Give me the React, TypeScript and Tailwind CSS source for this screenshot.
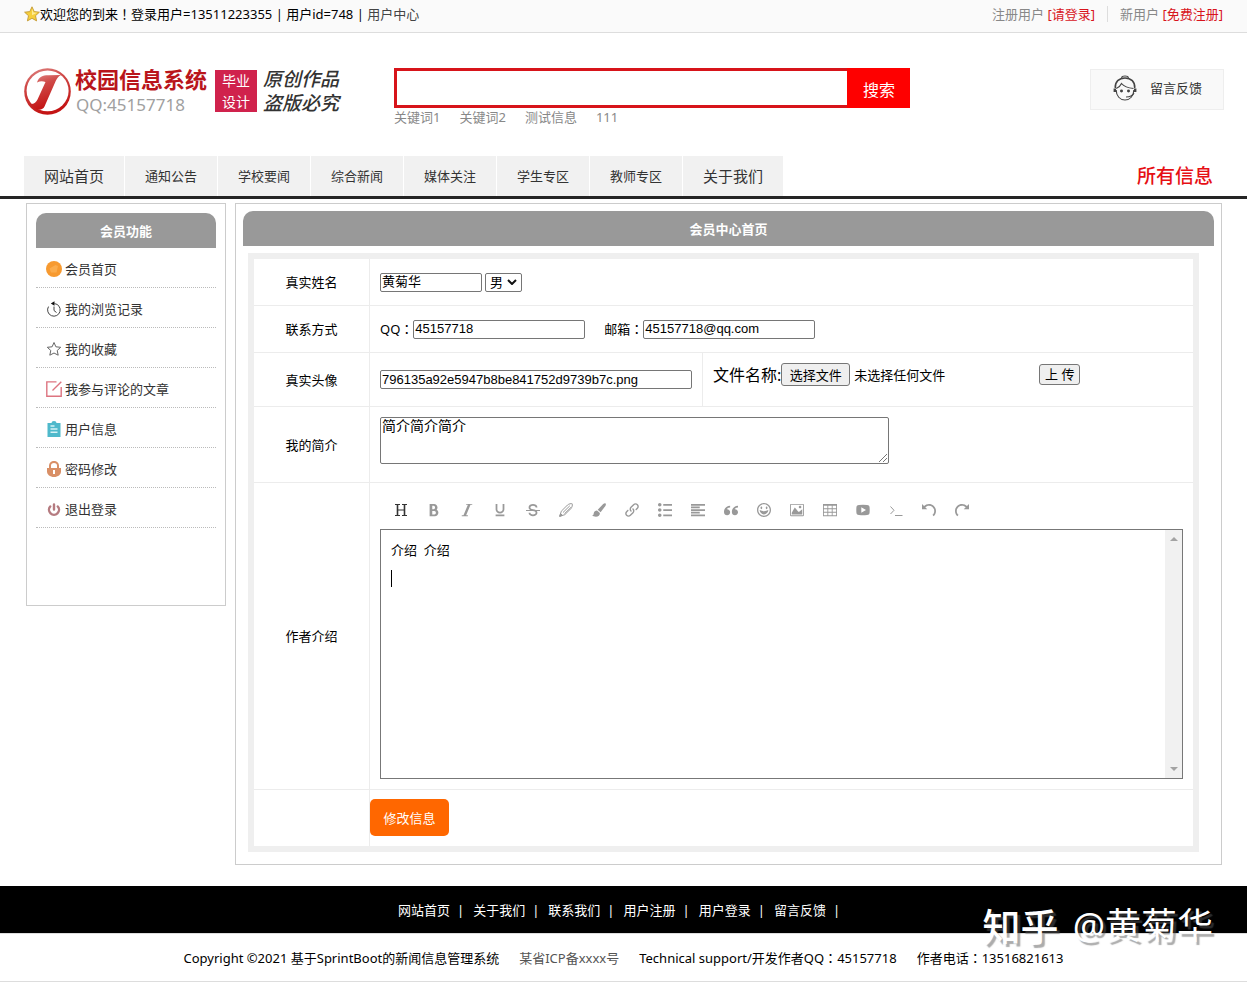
import React from "react";
import {
  ImBold,
  ImItalic,
  ImUnderline,
  ImStrikethrough,
  ImLink,
  ImList2,
  ImParagraphLeft,
  ImQuotesLeft,
  ImHappy,
  ImImage,
  ImTable2,
  ImUndo,
  ImRedo,
} from "react-icons/im";

const topics = ["通知公告", "学校要闻", "综合新闻", "媒体关注", "学生专区", "教师专区"];
const keywords = ["关键词1", "关键词2", "测试信息", "111"];
const footerLinks = ["网站首页", "关于我们", "联系我们", "用户注册", "用户登录", "留言反馈"];

const field =
  "rounded-[2px] border border-[#767676] bg-white px-px font-['Liberation_Sans','Noto_Sans_CJK_SC',sans-serif] text-[13px] text-black outline-none";
const labelCell =
  "border-r border-b border-[#ececec] text-center align-middle font-normal";
const bodyCell = "border-b border-[#ececec] px-[10px] align-middle";

// Full-width punctuation set in the middle of its cell.
function Mark({ children }: { children: string }) {
  return (
    <span lang="ja" className="font-['Noto_Sans_CJK_JP',sans-serif]">
      {children}
    </span>
  );
}

function StarIcon() {
  return (
    <svg className="size-4 shrink-0" viewBox="0 0 16 16" aria-hidden="true">
      <path
        d="M8 .8l2.2 4.8 5.2.6-3.9 3.5 1.1 5.2L8 12.3l-4.6 2.6 1.1-5.2L.6 6.2l5.2-.6z"
        fill="#f6cf3c"
        stroke="#c39a35"
        strokeWidth=".9"
      />
      <path d="M8 2.8l1.5 3.6 3.6.4L8 9.2z" fill="#fdeb96" />
    </svg>
  );
}

function LogoMark() {
  return (
    <svg className="size-[47px] shrink-0" viewBox="0 0 47 47" aria-hidden="true">
      <defs>
        <linearGradient id="logoRed" x1="0" y1="0" x2=".3" y2="1">
          <stop offset="0" stopColor="#e08a88" />
          <stop offset=".35" stopColor="#cf4a48" />
          <stop offset="1" stopColor="#c41414" />
        </linearGradient>
      </defs>
      <circle cx="23.5" cy="23.5" r="23.3" fill="url(#logoRed)" />
      <ellipse cx="23.6" cy="22.8" rx="21" ry="20.4" fill="#fff" />
      <path
        d="M13 14.5C14.500 9 19 7.200 24 7.200L37 7C34 8.500 32.500 11 31.500 13.500L20.500 38.500C18 43.500 11 42.500 5.500 36 10 36.500 12 34.500 13.500 31.500L21.500 14C18.500 12.800 16 13 13 14.500Z"
        fill="url(#logoRed)"
      />
    </svg>
  );
}

function HeadsetGirl() {
  return (
    <svg className="size-[26px] shrink-0" viewBox="0 0 24 26" fill="none" stroke="#444" strokeWidth="1.1" aria-hidden="true">
      <path d="M8.500 2.800C9 .4 15 .4 15.500 2.800" />
      <path d="M2.300 13C1.800 6.800 6 2.900 12 2.900S22.200 6.800 21.700 13" strokeWidth="1.500" />
      <path d="M3.200 15C3.200 21 7 25 12 25s8.800-4 8.800-10" />
      <path d="M3.200 13.500C5.500 12.500 7.500 11 8.500 8.500c2.500 3 6.500 4.500 12 5" />
      <path d="M1.800 13.500v3.500M22.200 13.500v3.500" strokeWidth="2.400" />
      <circle cx="8.500" cy="16" r=".9" fill="#333" />
      <circle cx="15.500" cy="16" r=".9" fill="#333" />
      <path d="M21 18c-1.500 3-4 4-8 4" />
    </svg>
  );
}

function HomeBadge() {
  return (
    <svg className="size-4" viewBox="0 0 16 16" aria-hidden="true">
      <circle cx="8" cy="8" r="8" fill="#f79a30" />
      <path d="M3.500 7.500l6-3.500 2.500 1-1.500 6.500H5z" fill="#fbac4c" />
    </svg>
  );
}

function HistoryIcon() {
  return (
    <svg className="size-4" viewBox="0 0 16 16" fill="none" stroke="#444" strokeWidth="1" aria-hidden="true">
      <path d="M8.500 2.600a6.300 6.300 0 1 1-6 3" />
      <path d="M8 5.500v4l2.500 2" />
      <path d="M8.500.200v4.600L4.800 2.500z" fill="#111" stroke="none" />
    </svg>
  );
}

function FavouriteIcon() {
  return (
    <svg className="size-4" viewBox="0 0 16 16" fill="none" stroke="#666" strokeWidth="1" strokeLinejoin="round" aria-hidden="true">
      <path d="M8 1.500l1.900 4.300 4.800.500-3.500 3.200 1 4.700L8 12l-4.200 2.200 1-4.700L1.300 6.300l4.800-.500z" />
    </svg>
  );
}

function CommentIcon() {
  return (
    <svg className="size-4" viewBox="0 0 16 16" fill="none" stroke="#dd7480" strokeWidth="1.400" aria-hidden="true">
      <path d="M10.500.900H.800v14.300h14.400V6M6.500 9.500L15.300.800" />
    </svg>
  );
}

function ClipboardIcon() {
  return (
    <svg className="size-4" viewBox="0 0 16 16" aria-hidden="true">
      <path d="M1.500 2h4a2.500 2 0 0 1 5 0h4v14h-13z" fill="#4fb9cb" />
      <path d="M4.500 5h4M4.500 8h7M4.500 11.300h7" stroke="#d6f2f6" strokeWidth="1.400" />
    </svg>
  );
}

function LockIcon() {
  return (
    <svg className="size-4" viewBox="0 0 16 16" aria-hidden="true">
      <path d="M4 8V4.500a4 3.600 0 0 1 8 0V8" fill="none" stroke="#d98f66" strokeWidth="2" />
      <path d="M1 7h14v3.500c0 3-3 5.500-7 5.500s-7-2.500-7-5.500z" fill="#d98f66" />
      <path d="M7 9h2v4H7z" fill="#fff" />
    </svg>
  );
}

function PowerIcon() {
  return (
    <svg className="size-4" viewBox="0 0 16 16" fill="none" stroke="#b57b80" strokeWidth="2.400" strokeLinecap="round" aria-hidden="true">
      <path d="M4.200 5.500a5 5 0 1 0 7.600 0M8 3.500v5" />
    </svg>
  );
}

function HeadingIcon() {
  return (
    <svg className="size-[14px] text-[#333]" viewBox="0 0 14 14" fill="none" stroke="currentColor" aria-hidden="true">
      <path d="M3.500 1.500v11M10.500 1.500v11" strokeWidth="1.600" />
      <path d="M1 1.500h5M8 1.500h5M1 12.500h5M8 12.500h5M3.500 7h7" strokeWidth="1" />
    </svg>
  );
}

function PencilIcon() {
  return (
    <svg className="size-[14px]" viewBox="0 0 14 14" fill="none" stroke="currentColor" strokeWidth="1" aria-hidden="true">
      <path d="M.800 13.200L2.300 8.200 8.500 2c1.500-1.200 3.500-1.600 4.700-1.200.400 1.300 0 3.200-1.200 4.700L5.800 11.700z" />
      <path d="M4 9.500L10.800 2.800" />
      <path d="M5.400 10.800l6.600-6.500" />
      <path d="M.600 13.400l1-2.800 1.800 1.800z" fill="currentColor" />
    </svg>
  );
}

function BrushIcon() {
  return (
    <svg className="size-[14px]" viewBox="0 0 14 14" fill="currentColor" aria-hidden="true">
      <path d="M13.600.400c.600.700.300 1.600-.200 2.500L8.600 9.200 5.700 6.700 11.200 1c.800-.700 1.800-1.100 2.400-.600z" />
      <path d="M5 7.400l2.900 2.500c.200 2.200-1.600 3.900-4 3.900-1.500 0-2.900-.500-3.800-1.200 1.400-.200 1.500-1.300 1.700-2.500C2 8.500 3.400 7.400 5 7.400z" />
    </svg>
  );
}

function VideoIcon() {
  return (
    <svg className="size-[14px]" viewBox="0 0 14 14" fill="currentColor" aria-hidden="true">
      <path
        fillRule="evenodd"
        d="M3 2Q7 1.600 11 2c2 .200 2.500 1 2.600 2.400q.200 2.600 0 5.200C13.500 11 13 11.800 11 12q-4 .400-8 0C1 11.800.500 11 .400 9.600q-.200-2.600 0-5.200C.500 3 1 2.200 3 2zm2.300 2.200v5.600L10 7z"
      />
    </svg>
  );
}

function TerminalIcon() {
  return (
    <svg className="size-[14px]" viewBox="0 0 14 14" fill="none" stroke="currentColor" aria-hidden="true">
      <path d="M1.500 3.500L5 7.300 1.500 11M6 12.500h7.500" />
    </svg>
  );
}

const tools = [
  { name: "标题", icon: <HeadingIcon /> },
  { name: "粗体", icon: <ImBold size={14} /> },
  { name: "斜体", icon: <ImItalic size={14} /> },
  { name: "下划线", icon: <ImUnderline size={14} /> },
  { name: "删除线", icon: <ImStrikethrough size={14} /> },
  { name: "文字颜色", icon: <PencilIcon /> },
  { name: "背景颜色", icon: <BrushIcon /> },
  { name: "链接", icon: <ImLink size={14} /> },
  { name: "列表", icon: <ImList2 size={14} /> },
  { name: "对齐", icon: <ImParagraphLeft size={14} /> },
  { name: "引用", icon: <ImQuotesLeft size={14} /> },
  { name: "表情", icon: <ImHappy size={14} /> },
  { name: "图片", icon: <ImImage size={14} /> },
  { name: "表格", icon: <ImTable2 size={14} /> },
  { name: "视频", icon: <VideoIcon /> },
  { name: "代码", icon: <TerminalIcon /> },
  { name: "撤销", icon: <ImUndo size={14} /> },
  { name: "重做", icon: <ImRedo size={14} /> },
];

const menu = [
  { text: "会员首页", icon: <HomeBadge /> },
  { text: "我的浏览记录", icon: <HistoryIcon /> },
  { text: "我的收藏", icon: <FavouriteIcon /> },
  { text: "我参与评论的文章", icon: <CommentIcon /> },
  { text: "用户信息", icon: <ClipboardIcon /> },
  { text: "密码修改", icon: <LockIcon /> },
  { text: "退出登录", icon: <PowerIcon /> },
];

function TopBar() {
  return (
    <div className="flex h-[33px] items-center justify-between border-b border-[#ddd] bg-[#fafafa] px-6 pb-[5px]">
      <div className="flex items-center">
        <StarIcon />
        <span className="whitespace-pre">
          欢迎您的到来<Mark>！</Mark>登录用户=13511223355 | 用户id=748 |{" "}
          <a href="#" className="text-[#444]">用户中心</a>
        </span>
      </div>
      <div className="flex items-center gap-3 text-[#888]">
        <span>
          注册用户 <a href="#" className="text-[#d8141c]">[请登录]</a>
        </span>
        <span className="h-4 w-px bg-[#ddd]" />
        <span>
          新用户 <a href="#" className="text-[#d8141c]">[免费注册]</a>
        </span>
      </div>
    </div>
  );
}

function Header() {
  return (
    <header className="flex h-[123px] items-start pr-[23px] pl-6">
      <div className="mt-8 flex w-[318px] shrink-0 items-center">
        <LogoMark />
        <div className="ml-1 w-[136px]">
          <div className="text-[22px] leading-7 font-bold text-[#b9151b]">校园信息系统</div>
          <div className="pl-px text-[17px] leading-6 text-[#a0a0a0]">QQ:45157718</div>
        </div>
        <div className="ml-1 w-[42px] bg-[#d0224c] text-center text-[14px] leading-[21px] text-white">
          毕业
          <br />
          设计
        </div>
        <div className="ml-[6px] text-[19px] leading-6 font-medium whitespace-nowrap text-[#333] italic">
          原创作品
          <br />
          盗版必究
        </div>
      </div>
      <div className="mt-[35px] ml-[52px] w-full max-w-[516px]">
        <form className="flex h-10" onSubmit={(e) => e.preventDefault()}>
          <input
            type="text"
            aria-label="搜索内容"
            className="min-w-0 flex-1 border-[3px] border-r-0 border-[#d7141a] bg-white px-2 outline-none"
          />
          <button type="submit" className="w-[63px] bg-[#fe0000] pt-[3px] pl-px text-base text-white">
            搜索
          </button>
        </form>
        <div className="flex gap-[19px] leading-[18px] text-[#888]">
          {keywords.map((word) => (
            <a key={word} href="#">{word}</a>
          ))}
        </div>
      </div>
      <a
        href="#"
        className="mt-9 ml-auto flex h-[41px] w-[134px] shrink-0 items-center justify-center gap-3 border border-[#eee] bg-[#f9f9f9] pb-[3px] text-[#333]"
      >
        <HeadsetGirl />
        留言反馈
      </a>
    </header>
  );
}

function NavBar() {
  return (
    <nav className="flex h-[43px] items-stretch border-b-[3px] border-[#252525] pr-[34px] pl-6 text-[#333]">
      <a href="#" className="flex items-center border-r border-white bg-[#f1f1f1] px-5 text-[15px]">网站首页</a>
      {topics.map((topic) => (
        <a key={topic} href="#" className="flex items-center border-r border-white bg-[#f1f1f1] px-5">
          {topic}
        </a>
      ))}
      <a href="#" className="flex items-center bg-[#f1f1f1] px-5 text-[15px]">关于我们</a>
      <a href="#" className="ml-auto flex items-center text-[19px] font-medium text-[#e60f14]">所有信息</a>
    </nav>
  );
}

function Sidebar() {
  return (
    <aside className="h-[403px] w-[200px] shrink-0 border border-[#ccc] px-[9px] pt-[9px]">
      <h2 className="flex h-[35px] items-center justify-center rounded-t-[10px] bg-[#999] font-bold text-white">
        会员功能
      </h2>
      <ul>
        {menu.map((item) => (
          <li key={item.text} className="border-b border-dotted border-[#bbb]">
            <a href="#" className="flex h-[39px] items-center gap-[3px] pt-[2px] pl-[10px] text-[#333]">
              {item.icon}
              {item.text}
            </a>
          </li>
        ))}
      </ul>
    </aside>
  );
}

function Editor() {
  return (
    <div>
      <div className="flex h-[38px] items-center pl-1 text-[#999]">
        {tools.map((tool) => (
          <button
            key={tool.name}
            type="button"
            aria-label={tool.name}
            className="flex h-8 w-[33px] items-center justify-center"
          >
            {tool.icon}
          </button>
        ))}
      </div>
      <div className="relative flex h-[250px] border border-[#777]">
        <textarea
          id="intro"
          defaultValue={"介绍  介绍\n"}
          className="flex-1 resize-none bg-white px-[10px] pt-[6px] leading-7 text-black outline-none"
        />
        <span className="absolute top-10 left-[10px] h-[17px] w-px bg-black" />
        <div className="flex w-[17px] flex-col items-center justify-between bg-[#f1f1f1] py-[7px]" aria-hidden="true">
          <svg className="h-1 w-2" viewBox="0 0 8 4"><path d="M0 4l4-4 4 4z" fill="#a3a3a3" /></svg>
          <svg className="h-1 w-2" viewBox="0 0 8 4"><path d="M0 0l4 4 4-4z" fill="#a3a3a3" /></svg>
        </div>
      </div>
    </div>
  );
}

function ProfileForm() {
  return (
    <form className="mt-[7px] mr-[22px] ml-3 border-[6px] border-[#efefef]" onSubmit={(e) => e.preventDefault()}>
      <table className="w-full table-fixed border-separate border-spacing-0">
        <colgroup>
          <col className="w-[116px]" />
          <col className="w-[333px]" />
          <col />
        </colgroup>
        <tbody>
          <tr className="h-[47px]">
            <th className={labelCell}><label htmlFor="realname">真实姓名</label></th>
            <td className={bodyCell} colSpan={2}>
              <div className="flex items-center gap-[3px]">
                <input id="realname" type="text" defaultValue="黄菊华" className={`${field} h-[19px] w-[102px]`} />
                <div className="relative">
                  <select
                    aria-label="性别"
                    defaultValue="男"
                    className="h-[19px] w-[37px] appearance-none rounded-[2px] border border-[#767676] bg-white pl-1 leading-[17px] text-black outline-none"
                  >
                    <option>男</option>
                    <option>女</option>
                  </select>
                  <svg className="pointer-events-none absolute top-[7px] right-[5px] h-[6px] w-[10px]" viewBox="0 0 10 6" fill="none" aria-hidden="true">
                    <path d="M1 1l4 4 4-4" stroke="#111" strokeWidth="2" />
                  </svg>
                </div>
              </div>
            </td>
          </tr>
          <tr className="h-[47px]">
            <th className={labelCell}>联系方式</th>
            <td className={bodyCell} colSpan={2}>
              <div className="flex items-center">
                <label htmlFor="qq">QQ<Mark>：</Mark></label>
                <input id="qq" type="text" defaultValue="45157718" className={`${field} h-[19px] w-[172px]`} />
                <label htmlFor="mail" className="ml-[19px]">邮箱<Mark>：</Mark></label>
                <input id="mail" type="text" defaultValue="45157718@qq.com" className={`${field} h-[19px] w-[172px]`} />
              </div>
            </td>
          </tr>
          <tr className="h-[54px]">
            <th className={labelCell}><label htmlFor="avatar">真实头像</label></th>
            <td className={`${bodyCell} border-r`}>
              <input
                id="avatar"
                type="text"
                defaultValue="796135a92e5947b8be841752d9739b7c.png"
                className={`${field} block h-[19px] w-full`}
              />
            </td>
            <td className={bodyCell}>
              <div className="relative flex items-center pb-[10px]">
                <span className="text-[16px] leading-6">文件名称:</span>
                <input id="file" type="file" className="sr-only" />
                <label
                  htmlFor="file"
                  className="flex h-[23px] w-[69px] items-center justify-center rounded-[3px] border border-[#767676] bg-[#efefef]"
                >
                  选择文件
                </label>
                <span className="ml-1 w-[185px]">未选择任何文件</span>
                <button type="button" className="h-[21px] w-[41px] rounded-[3px] border border-[#767676] bg-[#efefef] leading-[19px]">
                  上 传
                </button>
              </div>
            </td>
          </tr>
          <tr className="h-[76px]">
            <th className={labelCell}><label htmlFor="brief">我的简介</label></th>
            <td className={bodyCell} colSpan={2}>
              <div className="relative mb-2 w-[509px]">
                <textarea
                  id="brief"
                  defaultValue="简介简介简介"
                  className="block h-[47px] w-full resize-none rounded-[2px] border border-[#767676] bg-white px-px text-[14px] leading-[16px] text-black outline-none"
                />
                <svg className="absolute right-[2px] bottom-[2px] size-2" viewBox="0 0 8 8" stroke="#777" aria-hidden="true">
                  <path d="M0 8L8 0M4 8L8 4" />
                </svg>
              </div>
            </td>
          </tr>
          <tr className="h-[307px]">
            <th className={labelCell}><label htmlFor="intro">作者介绍</label></th>
            <td className={bodyCell} colSpan={2}>
              <div className="pb-[2px]">
                <Editor />
              </div>
            </td>
          </tr>
          <tr className="h-[56px]">
            <th className="border-r border-[#ececec]" aria-label="操作" />
            <td colSpan={2} className="align-top">
              <button type="submit" className="mt-[9px] block h-[37px] w-[79px] rounded-[5px] bg-[#ff6700] text-white">
                修改信息
              </button>
            </td>
          </tr>
        </tbody>
      </table>
    </form>
  );
}

function Footer() {
  return (
    <footer className="relative mt-[21px]">
      <div className="flex h-[47px] items-center justify-center bg-black text-white">
        {footerLinks.map((link) => (
          <span key={link} className="flex">
            <a href="#">{link}</a>
            <span className="mr-[9px] ml-[7px]">|</span>
          </span>
        ))}
      </div>
      <div className="flex h-[49px] items-center justify-center gap-5 border-y border-[#ddd]">
        <span>Copyright ©2021 基于SprintBoot的新闻信息管理系统</span>
        <a href="#" className="text-[#555]">某省ICP备xxxx号</a>
        <span>Technical support/开发作者QQ<Mark>：</Mark>45157718</span>
        <span>作者电话<Mark>：</Mark>13516821613</span>
      </div>
      <div className="pointer-events-none absolute top-5 right-[34px] flex items-center gap-[14px] text-[36px] leading-10 whitespace-nowrap text-white [text-shadow:3px_3px_1px_rgba(90,90,90,0.5)]">
        <span className="text-[38px] font-medium">知乎</span>
        <span>@黄菊华</span>
      </div>
    </footer>
  );
}

export default function App() {
  return (
    <div className="min-h-screen bg-white font-['Noto_Sans','Noto_Sans_CJK_SC',sans-serif] text-[13px] leading-5 text-black" lang="zh-CN">
      <TopBar />
      <Header />
      <NavBar />
      <div className="mt-1 flex items-start gap-[9px] pr-[25px] pl-[26px]">
        <Sidebar />
        <main className="min-w-0 flex-1 border border-[#ccc] pt-[7px] pb-3">
          <h1 className="mx-[7px] flex h-[35px] items-center justify-center rounded-t-[10px] bg-[#999] font-bold text-white">
            会员中心首页
          </h1>
          <ProfileForm />
        </main>
      </div>
      <Footer />
    </div>
  );
}
